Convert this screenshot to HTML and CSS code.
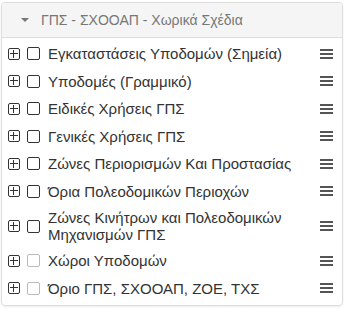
FILE: index.html
```html
<!DOCTYPE html>
<html lang="el">
    <head>
        <meta name="viewport" content="width=device-width, initial-scale=1.0">
        <title>Χωρικά Σχέδια</title>
        <link rel="stylesheet" href="styles.css">
    </head>
    <body>
        <div class="layers">
            <div class="layers__header">
                <span class="layers__caret"></span>
                <span>ΓΠΣ - ΣΧΟΟΑΠ - Χωρικά Σχέδια</span>
            </div>
            <ul class="layers__list">
                <li class="layer">
                    <span class="layer__expand"></span>
                    <span class="layer__check"></span>
                    <span class="layer__name">Εγκαταστάσεις Υποδομών (Σημεία)</span>
                    <span class="layer__menu"></span>
                </li>
                <li class="layer">
                    <span class="layer__expand"></span>
                    <span class="layer__check"></span>
                    <span class="layer__name">Υποδομές (Γραμμικό)</span>
                    <span class="layer__menu"></span>
                </li>
                <li class="layer">
                    <span class="layer__expand"></span>
                    <span class="layer__check"></span>
                    <span class="layer__name">Ειδικές Χρήσεις ΓΠΣ</span>
                    <span class="layer__menu"></span>
                </li>
                <li class="layer">
                    <span class="layer__expand"></span>
                    <span class="layer__check"></span>
                    <span class="layer__name">Γενικές Χρήσεις ΓΠΣ</span>
                    <span class="layer__menu"></span>
                </li>
                <li class="layer">
                    <span class="layer__expand"></span>
                    <span class="layer__check"></span>
                    <span class="layer__name">Ζώνες Περιορισμών Και Προστασίας</span>
                    <span class="layer__menu"></span>
                </li>
                <li class="layer">
                    <span class="layer__expand"></span>
                    <span class="layer__check"></span>
                    <span class="layer__name">Όρια Πολεοδομικών Περιοχών</span>
                    <span class="layer__menu"></span>
                </li>
                <li class="layer">
                    <span class="layer__expand"></span>
                    <span class="layer__check"></span>
                    <span class="layer__name">Ζώνες Κινήτρων και Πολεοδομικών Μηχανισμών ΓΠΣ</span>
                    <span class="layer__menu"></span>
                </li>
                <li class="layer is-disabled">
                    <span class="layer__expand"></span>
                    <span class="layer__check"></span>
                    <span class="layer__name">Χώροι Υποδομών</span>
                    <span class="layer__menu"></span>
                </li>
                <li class="layer is-disabled">
                    <span class="layer__expand"></span>
                    <span class="layer__check"></span>
                    <span class="layer__name">Όριο ΓΠΣ, ΣΧΟΟΑΠ, ΖΟΕ, ΤΧΣ</span>
                    <span class="layer__menu"></span>
                </li>
            </ul>
        </div>
    </body>
</html>
```

FILE: styles.css
```css
body {
    margin: 0;
    padding: 2px 3px 2px 1px;
    font-family: "Liberation Sans", Arial, sans-serif;
    background: #fff;
}
.layers {
    border: 1px solid #ddd;
    border-radius: 4px;
    box-shadow: 0 1px 2px rgba(0, 0, 0, 0.08);
    overflow: hidden;
}
.layers__header {
    display: flex;
    align-items: center;
    height: 34px;
    padding-left: 19px;
    background-color: #f5f5f5;
    border-bottom: 1px solid #ddd;
    color: #777;
    font-size: 14px;
}
.layers__caret {
    width: 0;
    height: 0;
    margin-right: 12px;
    border-left: 4px solid transparent;
    border-right: 4px solid transparent;
    border-top: 4px solid #777;
}
.layers__list {
    list-style: none;
    margin: 0;
    padding: 2px 0 3px;
}
.layer {
    display: flex;
    align-items: center;
    min-height: 27.5px;
    padding: 0 9px 0 6px;
    color: #333;
    font-size: 15px;
    line-height: 17px;
}
.layer__expand {
    position: relative;
    flex: none;
    width: 10px;
    height: 10px;
    border: 1px solid #333;
    border-radius: 2px;
}
.layer__expand::before,
.layer__expand::after {
    content: "";
    position: absolute;
    background: #333;
}
.layer__expand::before {
    left: 1px;
    right: 1px;
    top: 4px;
    height: 1px;
}
.layer__expand::after {
    top: 1px;
    bottom: 1px;
    left: 4px;
    width: 1px;
}
.layer__check {
    flex: none;
    width: 11px;
    height: 11px;
    margin-left: 7px;
    border: 1px solid #333;
    border-radius: 2px;
}
.is-disabled .layer__check {
    border-color: #bbb;
}
.layer__name {
    flex: 1;
    margin-left: 8px;
    padding: 4px 0;
}
.layer__menu {
    flex: none;
    width: 13px;
    height: 2px;
    margin-left: 8px;
    background: #555;
    box-shadow: 0 4px 0 #555, 0 -4px 0 #555;
}
```
